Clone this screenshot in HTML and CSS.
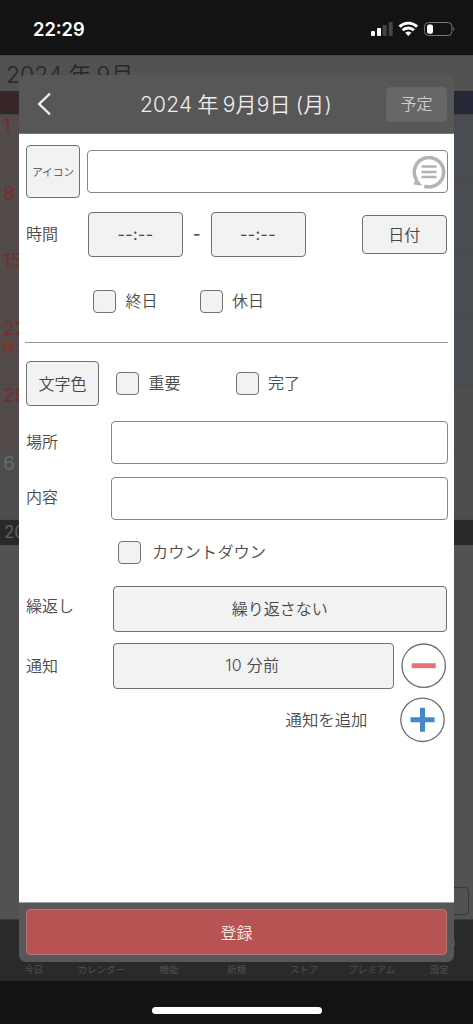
FILE: index.html
```html
<!DOCTYPE html>
<html lang="ja">
<head>
<meta charset="utf-8">
<title>予定</title>
<link rel="stylesheet" href="styles.css">
</head>
<body>
<div class="phone">
  <header class="status">
    <span class="clock">22:29</span>
    <svg class="status-icons" width="86" height="18" viewBox="0 0 86 18">
      <rect x="0" y="11" width="4" height="5" rx="1" fill="#fff"/>
      <rect x="6" y="8" width="4" height="8" rx="1" fill="#fff"/>
      <rect x="11.700" y="5" width="4" height="11" rx="1" fill="#464646"/>
      <rect x="17.700" y="2" width="4" height="14" rx="1" fill="#464646"/>
      <g fill="none" stroke="#fff" stroke-width="2.900">
        <path d="M28.500 6.600a13 13 0 0 1 17.600 0"/>
        <path d="M31.600 10.300a8.300 8.300 0 0 1 11.400 0"/>
      </g>
      <path d="M34.200 12.800a4.400 4.400 0 0 1 6.200 0L37.300 15.900z" fill="#fff"/>
      <rect x="53.500" y="2.500" width="27.500" height="13" rx="4" fill="none" stroke="#777"/>
      <rect x="56" y="4.500" width="6" height="9.200" rx="2" fill="#fff"/>
      <path d="M82.300 7a2.400 2.400 0 0 1 0 4z" fill="#777"/>
    </svg>
  </header>

  <main class="calendar">
    <div class="month">2024<span class="month-kanji">年</span>9月</div>
    <div class="weekdays"><span class="sun-head"></span><span class="mid-head"></span><span class="sat-head"></span></div>
    <div class="week"><div class="sun">1</div><div class="sat"></div></div>
    <div class="week"><div class="sun">8</div><div class="sat"></div></div>
    <div class="week"><div class="sun">15</div><div class="sat"></div></div>
    <div class="week"><div class="sun">22<small class="holiday">秋分</small></div><div class="sat"></div></div>
    <div class="week"><div class="sun">29</div><div class="sat plain"></div></div>
    <div class="week"><div class="sun plain">6</div><div class="sat plain"></div></div>
    <div class="day-bar">2024</div>
    <div class="day-list"><span class="list-button"></span></div>
    <nav class="tabs">
      <span>今日</span><span>カレンダー</span><span>機能</span><span>新規</span><span>ストア</span><span>プレミアム</span>
      <span><svg class="gear" width="32" height="32" viewBox="0 0 32 32"><circle cx="16" cy="16" r="9" fill="none" stroke="#4c4c4c" stroke-width="5"/><path d="M0 13h5v6H0zM27 13h5v6h-5z" fill="#4c4c4c"/></svg>設定</span>
    </nav>
  </main>
  <footer class="home"><span class="home-bar"></span></footer>

  <section class="dialog">
    <header class="dialog-head">
      <svg class="back" width="14" height="24" viewBox="0 0 14 24"><path d="M13 1.500L2.200 12l10.800 10.500" fill="none" stroke="#eee" stroke-width="2.400"/></svg>
      <h1 class="title">2024<span class="year">年</span>9月9日<span class="paren">(</span>月)</h1>
      <button class="kind">予定</button>
    </header>

    <form class="form">
      <div class="row row-name">
        <button type="button" class="btn icon-btn">アイコン</button>
        <div class="field name-field">
          <svg class="history" width="34" height="34" viewBox="0 0 34 34">
            <path d="M12.300 31.100A14.700 14.700 0 1 0 4.700 25.200" fill="none" stroke="#b3b3b3" stroke-width="3.500"/>
            <path d="M1.500 29.500L4 22.800l6.300 7.600z" fill="#b3b3b3"/>
            <path d="M9.500 11.600h15M9.500 16.900h15M9.500 22.100h15" stroke="#b3b3b3" stroke-width="2.500"/>
          </svg>
        </div>
      </div>
      <div class="row row-time">
        <span class="label">時間</span>
        <button type="button" class="btn time-btn">--:--</button>
        <span class="dash">-</span>
        <button type="button" class="btn time-btn">--:--</button>
        <button type="button" class="btn date-btn">日付</button>
      </div>
      <div class="row row-allday">
        <label class="check"><span class="box"></span>終日</label>
        <label class="check"><span class="box"></span>休日</label>
      </div>
      <hr class="rule">
      <div class="row row-color">
        <button type="button" class="btn color-btn">文字色</button>
        <label class="check"><span class="box"></span>重要</label>
        <label class="check"><span class="box"></span>完了</label>
      </div>
      <div class="row row-place"><span class="label">場所</span><div class="field"></div></div>
      <div class="row row-content"><span class="label">内容</span><div class="field"></div></div>
      <div class="row row-countdown"><label class="check"><span class="box"></span>カウントダウン</label></div>
      <div class="row row-repeat"><span class="label">繰返し</span><button type="button" class="btn wide-btn">繰り返さない</button></div>
      <div class="row row-notice">
        <span class="label">通知</span><button type="button" class="btn wide-btn minutes">10 分前</button>
        <svg class="round" width="46" height="46" viewBox="0 0 46 46"><circle cx="22.700" cy="22.700" r="21.700" fill="#fff" stroke="#6c6c6c" stroke-width="1.300"/><path d="M10.700 22.700h24" stroke="#e57373" stroke-width="5"/></svg>
      </div>
      <div class="row row-add">
        <span class="add-label">通知を追加</span>
        <svg class="round" width="46" height="46" viewBox="0 0 46 46"><circle cx="22.500" cy="22.800" r="21.700" fill="#fff" stroke="#6c6c6c" stroke-width="1.300"/><path d="M10.500 22.800h24M22.500 10.800v24" stroke="#4788c8" stroke-width="5"/></svg>
      </div>
    </form>

    <footer class="dialog-foot"><button class="submit">登録</button></footer>
  </section>
</div>
</body>
</html>
```

FILE: styles.css
```css
* { box-sizing: border-box; }
body { margin: 0; font-family: Inter, "Noto Sans CJK JP", sans-serif; background: #131313; }
button { font: inherit; margin: 0; padding: 0; }
.phone { position: relative; width: 473px; height: 1024px; display: flex; flex-direction: column; overflow: hidden; }

.status { height: 55px; flex: none; display: flex; justify-content: space-between; align-items: flex-start; background: #131313; padding: 18px 16px 0 33px; color: #fff; }
.clock { font-size: 18.300px; font-weight: 600; line-height: 23px; }
.status-icons { margin-top: 2px; }

.calendar { height: 926px; flex: none; display: flex; flex-direction: column; background: #525252; border-top: 1px solid #444; overflow: hidden; }
.month { height: 35px; flex: none; padding-left: 6px; font-size: 23px; line-height: 38px; color: #282828; white-space: nowrap; overflow: hidden; font-weight: 350; }
.month-kanji { margin: 0 5px 0 6px; }
.weekdays { height: 24px; flex: none; display: flex; border-bottom: 1px solid #444; }
.sun-head, .sat-head { width: 67px; background: #362628; }
.mid-head { flex: 1; }
.sat-head { background: #262838; }
.week { height: 67.500px; flex: none; display: flex; justify-content: space-between; border-bottom: 1px solid #494747; }
.sun { width: 67px; padding: 1px 0 0 3px; background: #534a4a; color: #782d2d; font-size: 19px; line-height: 20px; }
.sat { width: 67px; background: #494d51; }
.week .plain { background: #4d4d4d; color: #303030; }
.week .sun.plain { color: #6a6a6a; }
.holiday { display: block; font-size: 13px; line-height: 14px; color: #85341f; }
.day-bar { height: 25px; flex: none; background: #292929; color: #606060; font-size: 17px; line-height: 25px; padding-left: 4px; }
.day-list { flex: 1; display: flex; justify-content: flex-end; align-items: flex-end; padding: 0 4px 4px; }
.list-button { width: 44px; height: 28px; border: 1.500px solid #383838; border-radius: 4px; }
.tabs { height: 62px; flex: none; display: flex; align-items: flex-end; background: #2a2a2a; border-top: 1px solid #3a3a3a; color: #505050; font-size: 9.600px; line-height: 14px; padding-bottom: 4px; }
.tabs span { flex: 1; text-align: center; white-space: nowrap; }
.gear { display: block; margin: 0 auto 4px; }
.home { flex: 1; display: flex; justify-content: center; padding-top: 26px; background: #131313; }
.home-bar { width: 170px; height: 7px; border-radius: 4px; background: #fff; }

.dialog { position: absolute; left: 19px; top: 75px; width: 435px; height: 887px; display: flex; flex-direction: column; border-radius: 7px; overflow: hidden; background: #575757; color: #4c4c4c; font-size: 16px; font-weight: 350; }
.dialog-head { height: 59px; flex: none; display: flex; align-items: center; border-bottom: 1px solid #777; padding: 0 7px 0 18px; }
.title { flex: 1; margin: 0 0 0 1px; padding: 1px 0 0 88px; font-size: 21px; font-weight: 350; line-height: 30px; color: #eee; white-space: nowrap; letter-spacing: .2px; }
.year { margin: 0 4px 0 5px; }
.paren { margin-left: 5px; }
.kind { width: 61px; height: 35px; border: 1px solid #646464; border-radius: 4px; background: #676767; color: #ccc; padding-bottom: 2px; }
.form { flex: 1; display: flex; flex-direction: column; padding: 11px 6px 0 7px; background: #fff; }
.row { display: flex; align-items: center; flex: none; }
.btn { border: 1px solid #707070; border-radius: 4px; background: #f2f2f2; color: #484848; flex: none; padding-bottom: 1px; }
.field { flex: 1; height: 43px; border: 1px solid #858585; border-radius: 4px; background: #fff; }
.label { line-height: 24px; flex: none; }
.row-name { height: 53px; }
.icon-btn { width: 54px; height: 53px; font-size: 10.700px; margin-right: 7px; }
.name-field { display: flex; justify-content: flex-end; align-items: center; padding-right: 1.500px; }
.row-time { height: 45px; margin-top: 13.500px; padding-right: 1px; }
.row-time .label { width: 62px; }
.time-btn { width: 95px; height: 45px; letter-spacing: .4px; font-weight: 400; padding-bottom: 0; }
.dash { width: 27.500px; text-align: center; font-size: 17px; font-weight: 450; }
.date-btn { width: 85.500px; height: 39px; margin-left: auto; }
.row-allday { height: 23px; margin-top: 33.500px; padding-left: 67px; gap: 42px; }
.check { display: flex; align-items: center; gap: 9.500px; line-height: 23px; white-space: nowrap; }
.box { width: 23px; height: 23px; border: 1px solid #727272; border-radius: 4px; background: #f2f2f2; }
.rule { width: 423px; height: 1px; flex: none; border: 0; background: #999; margin: 29px 0 0 -1px; }
.row-color { height: 45px; margin-top: 18px; }
.color-btn { width: 73px; height: 45px; margin-right: 17px; }
.row-color .check + .check { margin-left: 55px; }
.row-place { height: 43px; margin-top: 15px; }
.row-content { height: 43px; margin-top: 12.500px; }
.row-place .label, .row-content .label { width: 85px; padding-bottom: 2px; }
.row-countdown { height: 24px; margin-top: 20.500px; padding-left: 92px; }
.row-countdown .check { gap: 11px; font-size: 16.300px; }
.row-repeat { height: 46px; margin-top: 21.500px; padding-right: 1px; }
.row-notice { height: 46px; margin-top: 11px; padding-right: 1px; }
.row-repeat .label, .row-notice .label { width: 86.500px; }
.row-repeat .label { padding-bottom: 6px; }
.wide-btn { flex: 1; height: 46px; }
.minutes { letter-spacing: .3px; padding-right: 2px; padding-bottom: 3px; }
.row-notice .round { margin-left: 7px; }
.row-add { height: 46px; margin-top: 8px; justify-content: flex-end; padding-right: 2px; gap: 32.500px; }
.add-label { font-size: 16.400px; padding-bottom: 2px; }
.round { flex: none; }

.dialog-foot { height: 60px; flex: none; border-top: 1px solid #a0a0a0; padding: 6px 7px 7px; display: flex; }
.submit { flex: 1; height: 46px; border: 1px solid #b57777; border-radius: 4px; background: #b75352; color: #f5e6e6; padding-bottom: 1px; }
```
